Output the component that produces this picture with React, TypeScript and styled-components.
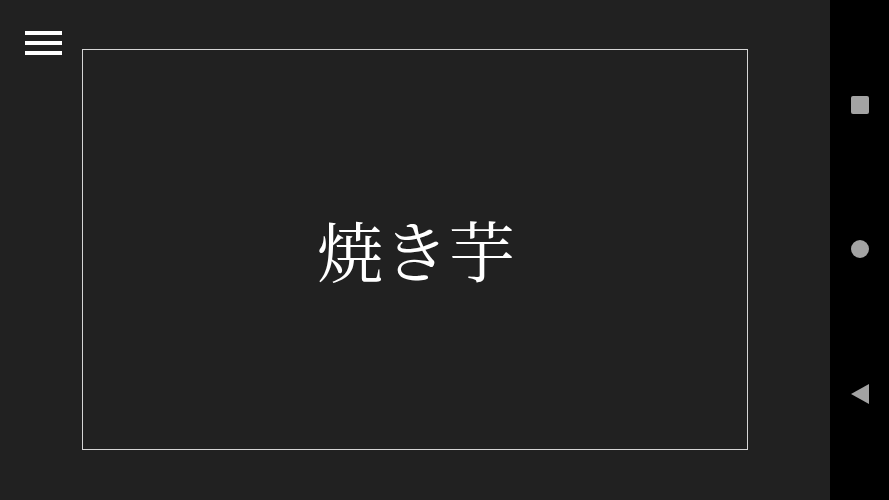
import styled, { createGlobalStyle } from "styled-components";

const GlobalStyle = createGlobalStyle`
  html, body {
    margin: 0;
    padding: 0;
    height: 100%;
    background: #212121;
  }
  #root {
    height: 100%;
  }
`;

const Screen = styled.div`
  display: flex;
  width: 100%;
  height: 100vh;
  overflow: hidden;
`;

const Main = styled.main`
  position: relative;
  flex: 1;
  display: flex;
  padding: 49px 82px 50px 82px;
  background: #212121;
  box-sizing: border-box;
`;

const MenuButton = styled.button`
  position: absolute;
  top: 31px;
  left: 25px;
  display: flex;
  flex-direction: column;
  gap: 6px;
  width: 37px;
  padding: 0;
  border: none;
  background: transparent;
  cursor: pointer;
`;

const MenuLine = styled.span`
  display: block;
  height: 4px;
  background: #ffffff;
`;

const Frame = styled.section`
  flex: 1;
  display: flex;
  align-items: center;
  justify-content: center;
  border: 1px solid #d6d6d6;
`;

const Title = styled.h1`
  margin: 0 0 2px 2px;
  color: #ffffff;
  font-family: "Noto Serif CJK JP", "Noto Sans CJK JP", serif;
  font-weight: 400;
  font-size: 66px;
  letter-spacing: 0;
  line-height: 1;
`;

const NavBar = styled.nav`
  width: 59px;
  flex-shrink: 0;
  display: flex;
  flex-direction: column;
  align-items: center;
  justify-content: space-between;
  padding: 96px 0 96px 0;
  box-sizing: border-box;
  background: #000000;
`;

const NavIcon = styled.svg`
  display: block;
  fill: #a3a3a3;
`;

export default function App() {
  return (
    <>
      <GlobalStyle />
      <Screen>
        <Main>
          <MenuButton aria-label="menu">
            <MenuLine />
            <MenuLine />
            <MenuLine />
          </MenuButton>
          <Frame>
            <Title>焼き芋</Title>
          </Frame>
        </Main>
        <NavBar>
          <NavIcon width="18" height="18" viewBox="0 0 18 18">
            <rect x="0" y="0" width="18" height="18" rx="2" />
          </NavIcon>
          <NavIcon width="18" height="18" viewBox="0 0 18 18">
            <circle cx="9" cy="9" r="9" />
          </NavIcon>
          <NavIcon width="18" height="20" viewBox="0 0 18 20">
            <polygon points="18,0 18,20 0,10" />
          </NavIcon>
        </NavBar>
      </Screen>
    </>
  );
}
